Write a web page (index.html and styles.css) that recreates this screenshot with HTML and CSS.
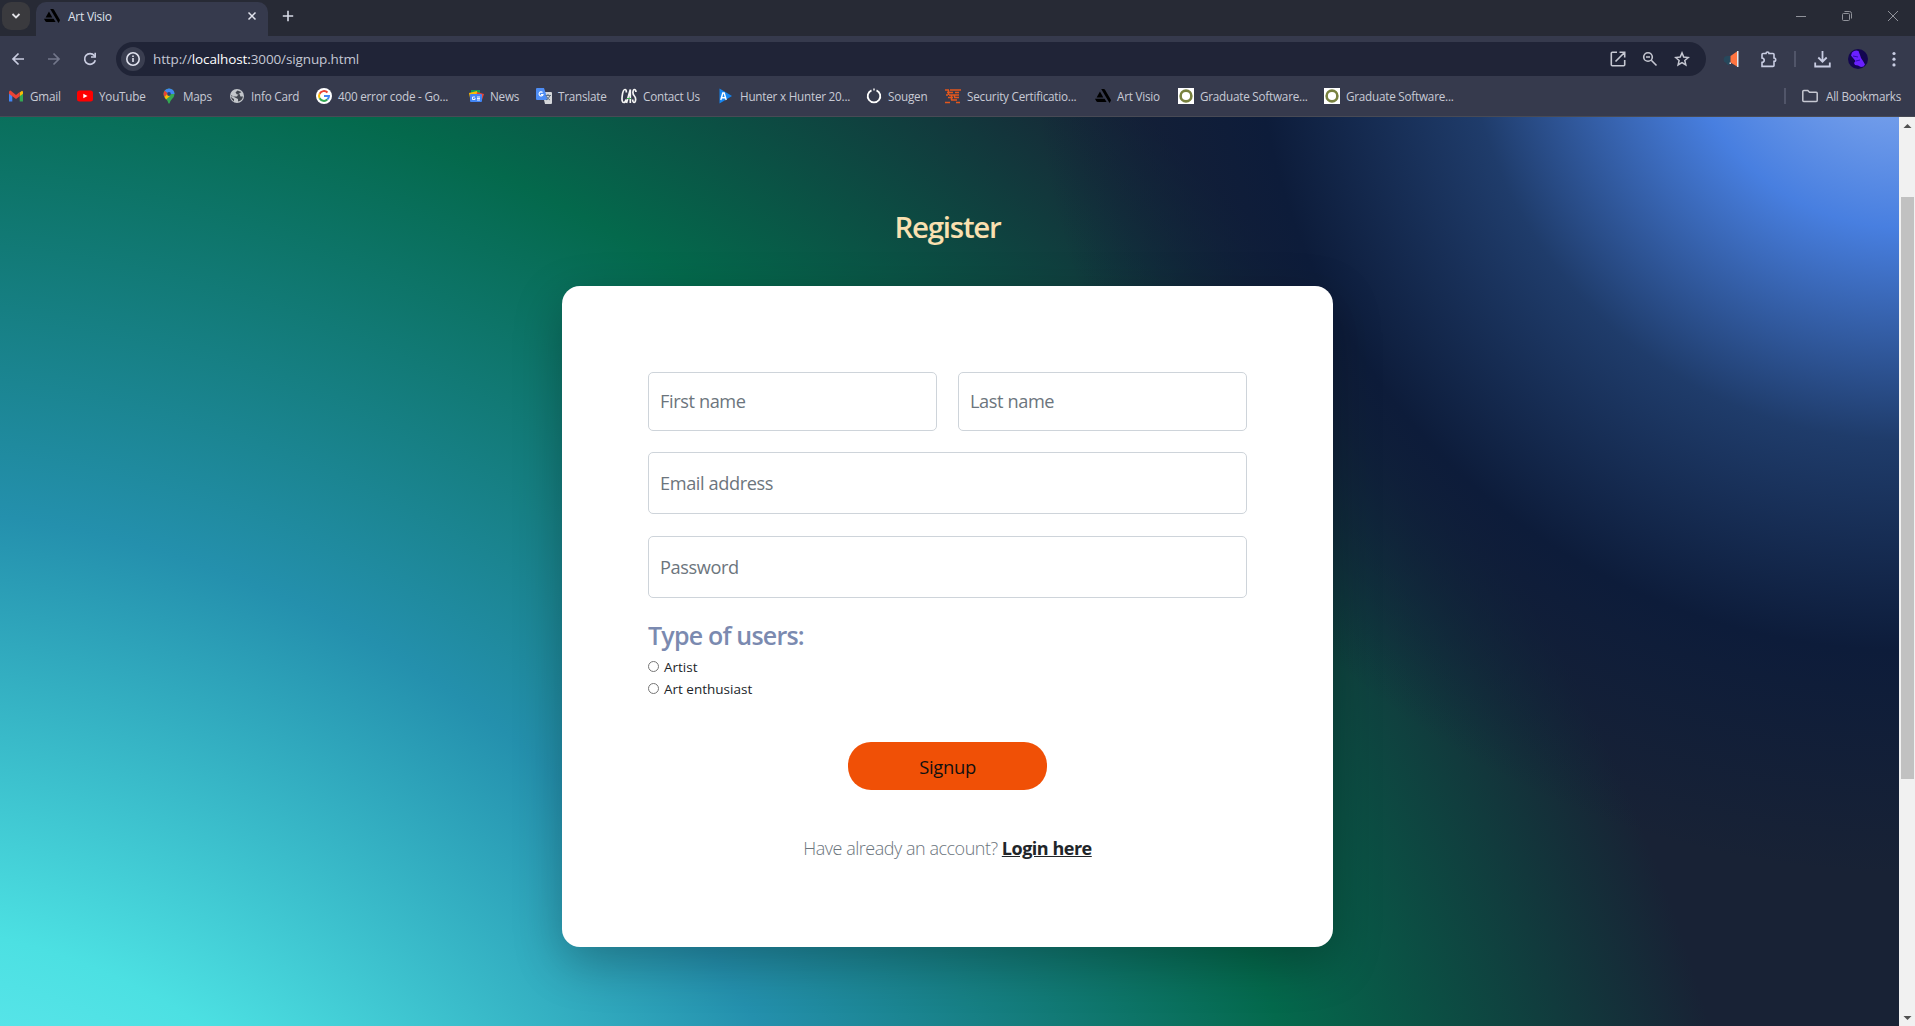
FILE: index.html
```html
<!DOCTYPE html>
<html lang="en">
<head>
<meta charset="utf-8">
<title>Art Visio</title>
<link rel="stylesheet" href="styles.css">
</head>
<body>
<svg class="defs" width="0" height="0" aria-hidden="true">
  <symbol id="art" viewBox="0 0 16 16"><path d="M0 10.7h9.6l2 3.4H2.7Q1.7 14.1 1.2 13z"/><path d="M5 3.6 8.3 9.4H1.6z"/><path d="M6.2 1h2.6q.8 0 1.2.7l5.7 9.9q.4.7 0 1.4l-1.2 1.9z"/></symbol>
  <symbol id="ring" viewBox="0 0 16 16"><path fill="#fff" d="M0 0h16v16H0z"/><circle cx="8" cy="8" r="5.4" fill="none" stroke="#78813f" stroke-width="2.6"/></symbol>
</svg>
<header class="browser">
  <div class="tabstrip">
    <div class="tab-search"><svg width="12" height="12" viewBox="0 0 12 12"><path d="M2.5 4 6 7.5 9.5 4" fill="none" stroke="#e3e3e8" stroke-width="1.8"/></svg></div>
    <div class="tab">
      <svg width="16" height="16"><use href="#art"/></svg>
      <span class="tab-title">Art Visio</span>
      <svg class="tab-close" width="10" height="10" viewBox="0 0 10 10"><path d="m1.5 1.5 7 7m0-7-7 7" stroke="#e0e2ec" stroke-width="1.5"/></svg>
    </div>
    <svg class="new-tab" width="12" height="12" viewBox="0 0 12 12"><path d="M6 .8v10.4M.8 6h10.4" stroke="#d8dae6" stroke-width="1.6"/></svg>
    <div class="window-controls">
      <svg width="12" height="12" viewBox="0 0 12 12"><path d="M1 6.5h10" stroke="#90929a"/></svg>
      <svg width="12" height="12" viewBox="0 0 12 12"><g fill="none" stroke="#90929a"><rect x="1.5" y="3.5" width="7" height="7" rx="1"/><path d="M3.5 1.5h5q2 0 2 2v5"/></g></svg>
      <svg width="12" height="12" viewBox="0 0 12 12"><path d="m1 1 10 10m0-10L1 11" stroke="#90929a"/></svg>
    </div>
  </div>
  <div class="toolbar">
    <div class="nav">
      <svg width="16" height="16" viewBox="0 0 16 16"><path d="M14 8H3m5.5-5.5L3 8l5.5 5.5" fill="none" stroke="#c9cce0" stroke-width="1.7"/></svg>
      <svg width="16" height="16" viewBox="0 0 16 16"><path d="M2 8h11M7.5 2.5 13 8l-5.500 5.500" fill="none" stroke="#73778b" stroke-width="1.7"/></svg>
      <svg width="16" height="16" viewBox="0 0 16 16"><path d="M13.3 9.2A5.4 5.4 0 1 1 12.300 4.600L13.500 6" fill="none" stroke="#c9cce0" stroke-width="1.7"/><path d="M14 1.800v5H9v-1.600h3.400V1.800z" fill="#c9cce0"/></svg>
    </div>
    <div class="omnibox">
      <span class="site-info"><svg width="16" height="16" viewBox="0 0 16 16"><circle cx="8" cy="8" r="6.2" fill="none" stroke="#e0e2ee" stroke-width="1.6"/><path d="M7.2 7h1.6v4H7.200zM7.200 4.500h1.600v1.600H7.200z" fill="#e0e2ee"/></svg></span>
      <span class="url">http://<b>localhost:</b>3000/signup.html</span>
      <div class="omni-actions">
        <svg width="16" height="16" viewBox="0 0 16 16"><g fill="none" stroke="#c6c8d2" stroke-width="1.6"><path d="M7 1.300H2.300q-1 0-1 1v11.400q0 1 1 1h11.400q1 0 1-1V9M5.500 10.500l9-9M9.500 1.300h5.200v5.200"/></g></svg>
        <svg width="16" height="16" viewBox="0 0 16 16"><g fill="none" stroke="#c6c8d2" stroke-width="1.6"><circle cx="6" cy="6" r="4.3"/><path d="m9.300 9.300 5.200 5.200M4 6h4"/></g></svg>
        <svg width="16" height="16" viewBox="0 0 16 16"><path d="m8 1.900 1.700 4.200 4.500.4-3.400 3 1 4.400L8 11.600l-3.900 2.300 1-4.400-3.400-3 4.500-.4z" fill="none" stroke="#c6c8d2" stroke-width="1.5"/></svg>
      </div>
    </div>
    <div class="extensions">
      <svg class="megaphone" width="16" height="16" viewBox="0 0 16 16"><path d="M7.500 5H4a3.500 3.500 0 0 0-1 6.800L4.500 14H6l1-2.500h.5z" fill="#27485c"/><path d="M7.500 5 14 .5v15L7.500 11.500z" fill="#ff7440"/><path d="M14 0h1.500v16H14zM6.500 11.500h1.500v1.500H6.500z" fill="#e2e5eb"/></svg>
      <svg class="puzzle" width="17" height="17" viewBox="0 0 17 17"><path d="M2 3.500Q2 2.500 3 2.500h3q0-1.500 1.500-1.500T9 2.500h4q1 0 1 1V7q1.700 0 1.700 1.700T14 10.400v4q0 1-1 1H2v-4q2.200-.3 2.200-2.200T2 7z" fill="none" stroke="#c9cde3" stroke-width="1.6"/></svg>
      <i class="sep"></i>
      <svg class="download" width="17" height="17" viewBox="0 0 17 17"><path d="M8.500 0v10.500M4.300 6.500l4.200 4.200 4.200-4.200M1.200 11.500v4h14.600v-4" fill="none" stroke="#c9cde3" stroke-width="1.8"/></svg>
      <svg class="avatar" width="20" height="20" viewBox="0 0 20 20"><circle cx="10" cy="10" r="10" fill="#130650"/><path d="M4 3.500q3-3 6.500-1.500l1.500 4 1 3 2 3 2 3.500-1.500 2-2.500.5-3-1.500-3-.5-1-2 1.500-2L5 9 3 6.500z" fill="#6a20ff"/><path d="m5 7 5 1M8 12l4-1" stroke="#2f0cb0"/></svg>
      <svg class="menu" width="4" height="16" viewBox="0 0 4 16" fill="#c9cde3"><circle cx="2" cy="2.500" r="1.600"/><circle cx="2" cy="8.200" r="1.600"/><circle cx="2" cy="13.900" r="1.600"/></svg>
    </div>
  </div>
  <nav class="bookmarks">
    <a><svg width="16" height="16" viewBox="0 0 16 16"><path d="M1 4v9.500h3.300V7z" fill="#4285f4"/><path d="M15 4v9.500h-3.300V7z" fill="#34a853"/><path d="M11.700 4.500 14 2.800q1 .2 1 1.500v1.500l-3.300 2.500z" fill="#fbbc04"/><path d="M1 4.300Q1 2.600 2.500 2.600L8 6.900l3.700-2.800v4.200L8 11 1 5.800z" fill="#ea4335"/></svg>Gmail</a>
    <a><svg width="16" height="16" viewBox="0 0 16 16"><rect y="2.500" width="16" height="11" rx="2.500" fill="#f00"/><path d="M6.300 5.700v4.600L10.500 8z" fill="#fff"/></svg>YouTube</a>
    <a><svg width="16" height="16" viewBox="0 0 16 16"><path d="M2.500 6a5.500 5.500 0 0 1 11 0q0 2.500-2.500 5-2 2-2.500 4.500h-1Q7 13 5 11 2.500 8.500 2.500 6z" fill="#34a853"/><path d="M8 .5a5.500 5.500 0 0 1 5.500 5.500L8 6 3.500 3q1.500-2.500 4.500-2.500z" fill="#4285f4"/><path d="M3.700 2.700 7 5.500 3.500 9Q1.500 5.800 3.700 2.700z" fill="#ea4335"/><path d="m9.500 7.500-4.500 4L3.500 9 7 5z" fill="#fbbc04"/><circle cx="8" cy="6" r="1.900" fill="#27437c"/></svg>Maps</a>
    <a><svg width="16" height="16" viewBox="0 0 16 16"><circle cx="8" cy="8" r="7" fill="#c3c6cb"/><path d="M8.500 2.500 6.500 4.500l1.500 2 2.500-.5 1 2.500h2.500q-1 4.500-5 5V11L6 9.500 2 7.500q.5 2.500 3 3.500v2.500L2.500 11 2 7l2.500 1.500h3.500L9.500 6l3-2z" fill="#41454f"/></svg>Info Card</a>
    <a><svg width="16" height="16" viewBox="0 0 16 16"><circle cx="8" cy="8" r="8" fill="#fff"/><g fill="none" stroke-width="2"><path d="M11.500 4.500A5 5 0 0 0 3.600 5.700" stroke="#ea4335"/><path d="M3.600 5.700a5 5 0 0 0 0 4.600" stroke="#fbbc05"/><path d="M3.600 10.300a5 5 0 0 0 7.700 1.300" stroke="#34a853"/><path d="M11.300 11.600A5 5 0 0 0 13 8H8" stroke="#4285f4"/></g></svg>400 error code - Go...</a>
    <a><svg width="16" height="16" viewBox="0 0 16 16"><path d="M3 2h9v7H3z" fill="#0f9d58"/><path d="m1 5 8-2 1 5-8 2z" fill="#fbbc04"/><path d="m9 4 7 2-2 6-6-2z" fill="#ea4335"/><rect x="2" y="6" width="12" height="8" rx="1" fill="#4285f4"/><path d="M7 9H4.500v2.500H7V10M9 9h3M9 10.500h3M9 12h3" fill="none" stroke="#fff" stroke-width=".9"/></svg>News</a>
    <a><svg width="16" height="16" viewBox="0 0 16 16"><path d="M6 4h9q1 0 1 1v10q0 1-1 1H9z" fill="#d5d7da"/><path d="M1 0h7l4 12H1q-1 0-1-1V1q0-1 1-1z" fill="#4e8df5"/><path d="M6.500 4.500a2 2 0 1 0 .5 2H5" fill="none" stroke="#fff" stroke-width="1.1"/><path d="M9.500 7.500H15M12 6v1.500M14 7.500q-1 3-4 4.500m.5-3.500q1.500 2.500 3.500 3.500" stroke="#607080" fill="none"/></svg>Translate</a>
    <a><svg width="16" height="16" viewBox="0 0 16 16"><g fill="none" stroke="#f4f4f4" stroke-width="1.7"><path d="M5.300 4.500Q5.500 1.500 4 1.500 2 1.500 1.200 8T2.800 14.500q1.700 0 2.200-3M5.500 15 9.300 1.500V15M15 4q-.3-2.500-1.600-2.500t-1.500 3q0 2 1.500 3.500t1.200 4q-.3 2.500-1.500 2.500t-1.500-3"/></g><path d="M6 10.500h4" stroke="#38b44a"/></svg>Contact Us</a>
    <a><svg width="16" height="16" viewBox="0 0 16 16"><path d="M1.500.5 14 8 1.500 15.500z" fill="#1684ee"/><path d="m2.800 12 2-7h1.400l2 7M3.800 9.800h3.500" fill="none" stroke="#fff" stroke-width="1.4"/></svg>Hunter x Hunter 20...</a>
    <a><svg width="16" height="16" viewBox="0 0 16 16"><path d="M5.500 2.300A6.300 6.300 0 1 0 10.500 2.300" fill="none" stroke="#fff" stroke-width="1.8"/><path d="M7.300.5h1.400v2H7.300z" fill="#fff"/></svg>Sougen</a>
    <a><svg width="16" height="16" viewBox="0 0 16 16"><path d="M0 2h4m1 0h11M2 4.500h6m2 0h4M4 7h10M1 7h2M3 9.500h5m1 0h5M6 12h6M0 14.500h5m6 0h4M3.500 2v5m3 0v5m3-5v2" stroke="#e4571d" stroke-width="1.5" fill="none"/></svg>Security Certificatio...</a>
    <a><svg width="16" height="16"><use href="#art"/></svg>Art Visio</a>
    <a><svg width="16" height="16"><use href="#ring"/></svg>Graduate Software...</a>
    <a><svg width="16" height="16"><use href="#ring"/></svg>Graduate Software...</a>
    <div class="all-bookmarks"><i class="sep"></i><svg width="16" height="16" viewBox="0 0 16 16"><path d="M.8 12.500v-9q0-1 1-1h4l1.700 1.800h6.700q1 0 1 1v7.200q0 1-1 1H1.800q-1 0-1-1z" fill="none" stroke="#c6c8d2" stroke-width="1.5"/></svg><span>All Bookmarks</span></div>
  </nav>
</header>
<div class="viewport">
  <main class="page">
    <h1>Register</h1>
    <form class="card">
      <div class="names">
        <input type="text" placeholder="First name">
        <input type="text" placeholder="Last name">
      </div>
      <input class="tall" type="email" placeholder="Email address">
      <input class="tall" type="password" placeholder="Password">
      <h2>Type of users:</h2>
      <label><i class="radio"></i>Artist</label>
      <label><i class="radio"></i>Art enthusiast</label>
      <button type="button">Signup</button>
      <p class="login"><span>Have already an account?</span> <a>Login here</a></p>
    </form>
  </main>
  <aside class="scrollbar">
    <svg width="16" height="17" viewBox="0 0 16 17"><path d="M4.500 11h8l-4-4z" fill="#505050"/></svg>
    <div class="track"><div class="thumb"></div></div>
    <svg width="16" height="17" viewBox="0 0 16 17"><path d="M4.500 7h8l-4 4z" fill="#505050"/></svg>
  </aside>
</div>
</body>
</html>
```
FILE: styles.css
```css
* { box-sizing: border-box; }
body {
  margin: 0;
  height: 1026px;
  overflow: hidden;
  display: flex;
  flex-direction: column;
  font-family: "Open Sans", "Noto Sans", sans-serif;
}
svg { flex: none; display: block; }
.defs { position: absolute; }

/* browser frame */
.browser {
  height: 117px;
  flex: none;
  background: #363a4d;
  border-bottom: 1px solid #484a55;
  color: #c8cad5;
}
.tabstrip {
  height: 36px;
  display: flex;
  background: #272a35;
}
.tab-search {
  width: 28px;
  height: 28px;
  margin: 2px 6px 0 2px;
  display: grid;
  place-items: center;
  background: #3a3a3e;
  border-radius: 9px;
}
.tab {
  width: 232px;
  height: 34px;
  margin-top: 2px;
  padding: 0 11px 6px 8px;
  display: flex;
  align-items: center;
  background: #363a4d;
  border-radius: 10px 10px 0 0;
}
.tab-title {
  margin-left: 8px;
  flex: 1;
  font-size: 12px;
  letter-spacing: -.25px;
  color: #dfe1eb;
}
.new-tab { margin: 10px 0 0 14px; }
.window-controls { display: flex; gap: 34px; margin: 10px 16px 0 auto; }

.toolbar { height: 46px; padding-top: 6px; display: flex; }
.nav { width: 116px; display: flex; gap: 20px; padding: 9px 0 0 10px; }
.omnibox {
  width: 1590px;
  height: 34px;
  display: flex;
  align-items: center;
  padding: 0 16px 0 5px;
  background: #202437;
  border-radius: 17px;
}
.site-info {
  width: 24px;
  height: 24px;
  display: grid;
  place-items: center;
  background: #3a3e50;
  border-radius: 50%;
}
.url {
  flex: 1;
  margin-left: 8px;
  font-size: 13.5px;
  letter-spacing: -.12px;
  color: #c4c7d4;
}
.url b { font-weight: 400; color: #fff; }
.omni-actions { display: flex; gap: 16px; }
.extensions { flex: 1; display: flex; align-items: center; height: 34px; padding-left: 17px; }
.puzzle { margin-left: 21px; }
.sep { width: 2px; height: 16px; background: #515569; }
.extensions .sep { margin-left: 17px; }
.download { margin-left: 18px; }
.avatar { margin-left: 17px; }
.menu { margin-left: 24px; }

.bookmarks {
  height: 34px;
  display: flex;
  padding-bottom: 7px;
  padding-left: 8px;
  font-size: 11.7px;
  letter-spacing: -.22px;
  white-space: nowrap;
}
.bookmarks a { display: flex; align-items: center; gap: 6px; width: 146px; }
.bookmarks a:nth-child(1) { width: 69px; }
.bookmarks a:nth-child(2) { width: 84px; }
.bookmarks a:nth-child(3) { width: 68px; }
.bookmarks a:nth-child(4) { width: 87px; }
.bookmarks a:nth-child(5) { width: 152px; }
.bookmarks a:nth-child(6) { width: 68px; }
.bookmarks a:nth-child(7) { width: 85px; }
.bookmarks a:nth-child(8) { width: 97px; }
.bookmarks a:nth-child(9) { width: 148px; }
.bookmarks a:nth-child(10) { width: 79px; }
.bookmarks a:nth-child(11) { width: 150px; }
.bookmarks a:nth-child(12) { width: 83px; }
.all-bookmarks { display: flex; align-items: center; margin-left: auto; padding-right: 14px; }
.all-bookmarks svg { margin: 0 8px 0 16px; }

/* page */
.viewport { flex: 1; display: flex; min-height: 0; }
.page {
  flex: 1;
  display: flex;
  flex-direction: column;
  align-items: center;
  padding-right: 4px;
  background:
    radial-gradient(circle at 1905px -117px, #8aaef2 0, #6f9bea 120px, #487fe0 228px, #1f3c6b 440px, #0d1c3a 650px, rgba(13, 28, 58, 0) 875px),
    radial-gradient(circle at -141px 1427px, #60e8ee 450px, #4ce0e2 622px, #2490ad 1037px, #04694c 1512px, #182235 1922px);
}
h1 {
  margin: 91px 0 0;
  height: 78px;
  font-size: 29.5px;
  line-height: 38px;
  font-weight: 600;
  letter-spacing: -1.25px;
  color: #fae0b0;
}
.card {
  width: 771px;
  height: 661px;
  padding: 86px 86px 0;
  display: flex;
  flex-direction: column;
  background: #fff;
  border-radius: 18px;
  box-shadow: 0 16px 48px rgba(0, 0, 0, .26);
}
.names { display: grid; grid-template-columns: 1fr 1fr; gap: 21px; }
input {
  flex: none;
  width: 100%;
  height: 59px;
  padding: 0 11px 2px;
  border: 1px solid #ced4da;
  border-radius: 5px;
  font: 18.2px "Open Sans", sans-serif;
  letter-spacing: -.4px;
}
input::placeholder { color: #6c757d; opacity: 1; }
.tall { height: 62px; margin-top: 21px; padding-bottom: 0; }
.tall + .tall { margin-top: 22px; }
h2 {
  margin: 21px 0 5px;
  font-size: 25px;
  line-height: 32px;
  font-weight: 600;
  letter-spacing: -.8px;
  color: #7b8ab0;
}
label {
  display: flex;
  height: 22px;
  align-items: center;
  font-size: 13.5px;
  color: #212529;
}
.radio {
  width: 11px;
  height: 11px;
  margin: -2px 5px 0 0;
  border: 1px solid #767676;
  border-radius: 50%;
}
button {
  align-self: center;
  width: 199px;
  height: 48px;
  margin-top: 42px;
  border: 0;
  border-radius: 23px;
  background: #f05006;
  font: 18.4px "Open Sans", sans-serif;
  letter-spacing: -.3px;
  color: #111;
}
.login {
  margin: 44px 0 0;
  font-size: 18px;
  line-height: 28px;
  text-align: center;
  letter-spacing: -.48px;
  white-space: nowrap;
}
.login span { font-weight: 300; color: #6c757d; }
.login a { font-weight: 700; text-decoration: underline; color: #212529; }

.scrollbar { width: 16px; display: flex; flex-direction: column; background: #f1f1f1; }
.track { flex: 1; padding: 63px 1px 0 2px; }
.thumb { height: 582px; background: #c1c1c1; }
```
